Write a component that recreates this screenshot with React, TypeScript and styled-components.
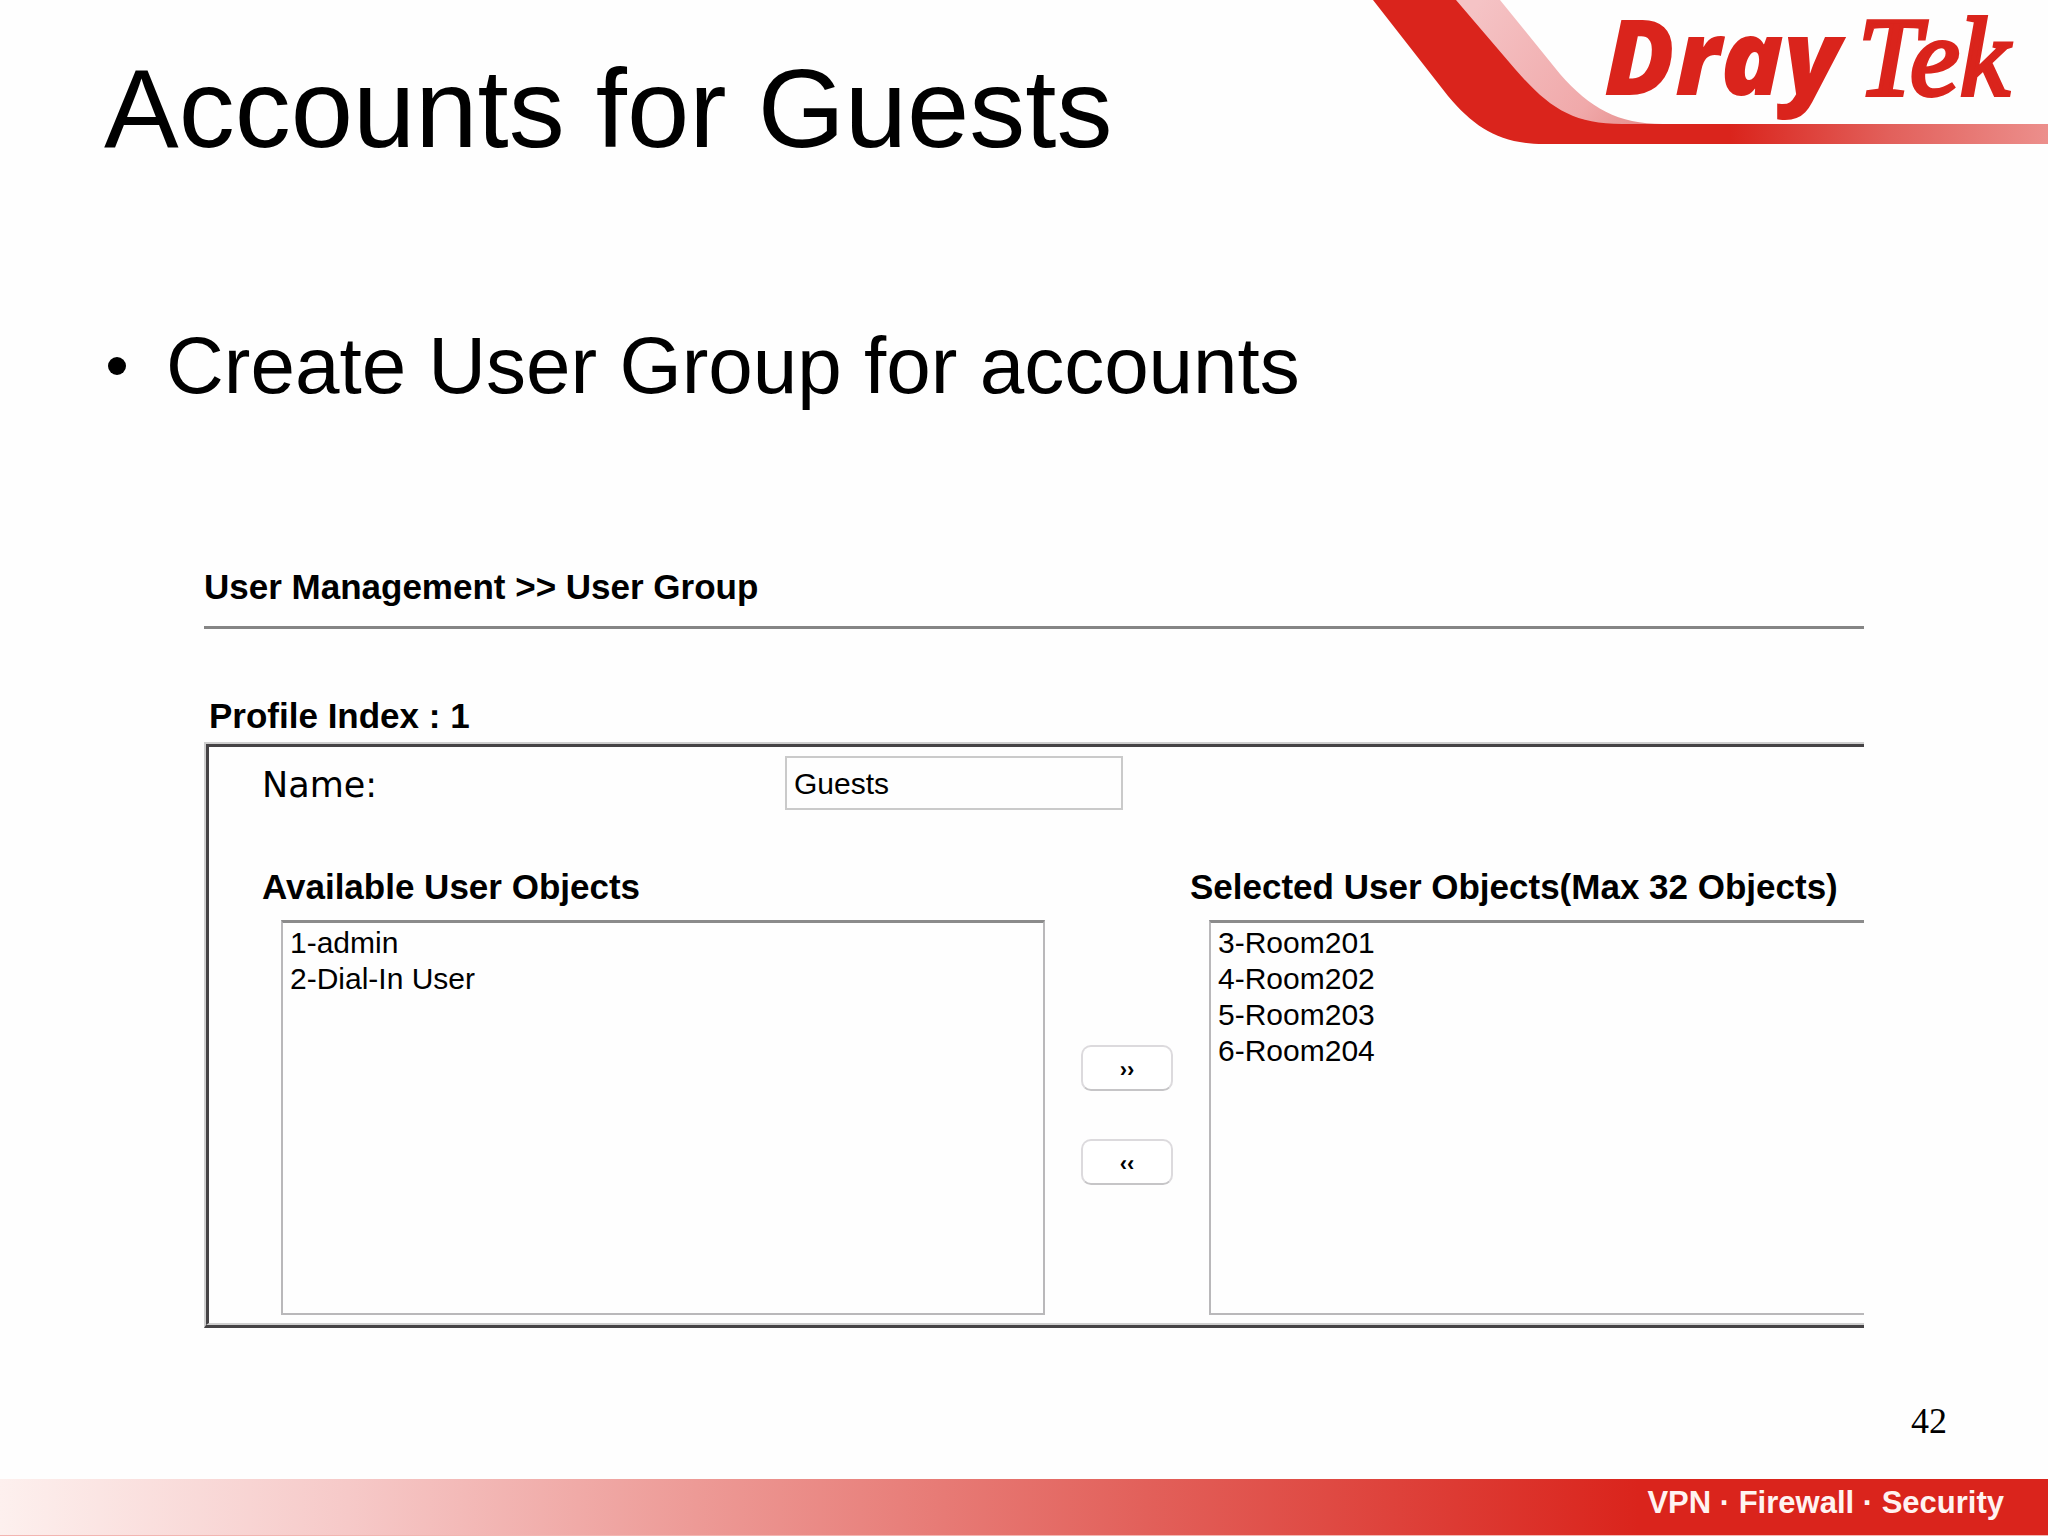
import React from "react";
import styled, { createGlobalStyle } from "styled-components";

const sans = `"Liberation Sans", Arial, Helvetica, sans-serif`;
const serif = `"Liberation Serif", "Times New Roman", serif`;
const red = "#da241c";

const GlobalStyle = createGlobalStyle`
  *, *::before, *::after { box-sizing: border-box; }
  body { margin: 0; background: #fefefe; color: #000; font-family: ${sans}; }
`;

const Slide = styled.main`
  display: flex;
  flex-direction: column;
  min-height: 100vh;
  overflow: hidden;
`;

const Header = styled.header`
  display: flex;
  justify-content: space-between;
  align-items: flex-start;
  padding-left: 104px;
`;

const Title = styled.h1`
  margin: 0;
  padding-top: 45px;
  font-size: 112px;
  line-height: 128px;
  font-weight: 400;
  white-space: nowrap;
`;

const Brand = styled.svg`
  flex: none;
  width: 688px;
  height: 160px;
  overflow: visible;
`;

const Points = styled.ul`
  margin: 147px 0 0;
  padding: 0 0 0 108px;
  list-style: none;
  font-size: 80px;
  line-height: 92px;
`;

const Point = styled.li`
  display: flex;
  align-items: center;
  gap: 40px;

  &::before {
    content: "";
    width: 18px;
    height: 18px;
    border-radius: 50%;
    background: #000;
  }
`;

const Screen = styled.section`
  margin: 155px 184px 0 204px;
  overflow: hidden;
`;

const Heading = styled.h2`
  margin: 0;
  font-size: 35px;
  line-height: 40px;
  font-weight: 700;
  white-space: nowrap;
`;

const Breadcrumb = styled(Heading)`
  padding-bottom: 19px;
  border-bottom: 3px solid #858585;
`;

const ProfileHeading = styled(Heading)`
  padding: 67px 0 6px 5px;
`;

const Frame = styled.div`
  border: 0 solid #cfcfcf;
  border-width: 2px 0 3px 2px;
  border-bottom-color: #454345;
`;

const FrameBody = styled.form`
  padding: 9px 0 8px 53px;
  border: 0 solid #454345;
  border-width: 3px 0 2px 3px;
  border-bottom-color: #cfcfcf;
`;

const NameRow = styled.div`
  display: flex;
  align-items: flex-end;
  margin-bottom: 57px;
`;

const NameLabel = styled.label`
  width: 523px;
  font-family: "DejaVu Sans", Verdana, sans-serif;
  font-size: 35px;
  line-height: 50px;
`;

const NameInput = styled.input`
  width: 338px;
  height: 54px;
  padding: 2px 7px 0;
  border: 2px solid #cacaca;
  border-radius: 0;
  outline: 0;
  background: #fefefe;
  color: #000;
  font-family: ${sans};
  font-size: 30px;
`;

const Transfer = styled.div`
  display: flex;
`;

const ObjectColumn = styled.div`
  flex: none;
  display: flex;
  flex-direction: column;
  gap: 13px;
`;

const ObjectLabel = styled.label`
  font-size: 35px;
  line-height: 40px;
  font-weight: 700;
  white-space: nowrap;
`;

const ObjectList = styled.select`
  width: 764px;
  height: 395px;
  margin-left: 19px;
  padding: 3px 7px;
  border: 2px solid #b9b8ba;
  border-top: 3px solid #8b8b8b;
  border-radius: 0;
  outline: 0;
  background: #fefefe;
  color: #000;
  font-family: ${sans};
  font-size: 30px;
`;

const ObjectOption = styled.option`
  min-height: 36px;
  padding: 0;
`;

const MoveButtons = styled.div`
  flex: none;
  display: flex;
  flex-direction: column;
  gap: 48px;
  padding: 178px 17px 0 36px;
`;

const MoveButton = styled.button`
  width: 92px;
  height: 46px;
  padding: 4px 0 0;
  border: 2px solid #dcdadd;
  border-bottom-color: #c6c5c7;
  border-radius: 10px;
  background: #fff;
  color: #000;
  font-family: ${sans};
  font-size: 22px;
  font-weight: 700;
`;

const Footer = styled.footer`
  margin-top: auto;
`;

const PageNumber = styled.p`
  margin: 0;
  padding: 0 101px 38px 0;
  font-family: ${serif};
  font-size: 36px;
  line-height: 40px;
  text-align: right;
`;

const Strip = styled.div`
  height: 57px;
  padding: 6px 44px 0 0;
  border-bottom: 1px solid #f3b5b1;
  background: linear-gradient(90deg, #fdf0ee 0%, #f6c9c8 17%, #ed9a96 34%, #e2605a 56%, ${red} 80%);
  color: #fff3f1;
  font-size: 31px;
  line-height: 36px;
  font-weight: 700;
  text-align: right;
`;

type ObjectsProps = { id: string; label: string; items: string[] };

function UserObjects({ id, label, items }: ObjectsProps) {
  return (
    <ObjectColumn>
      <ObjectLabel htmlFor={id}>{label}</ObjectLabel>
      <ObjectList id={id} multiple>
        {items.map((item) => (
          <ObjectOption key={item}>{item}</ObjectOption>
        ))}
      </ObjectList>
    </ObjectColumn>
  );
}

function DrayTekBrand() {
  return (
    <Brand viewBox="0 0 688 160" role="img" aria-label="DrayTek">
      <defs>
        <linearGradient id="band" gradientUnits="userSpaceOnUse" x1="370" y1="0" x2="688" y2="0">
          <stop offset="0" stopColor={red} />
          <stop offset="0.5" stopColor="#e2605b" />
          <stop offset="1" stopColor="#ec8f8c" />
        </linearGradient>
        <linearGradient id="fold" gradientUnits="userSpaceOnUse" x1="120" y1="0" x2="290" y2="124">
          <stop offset="0" stopColor="#f5c3c5" />
          <stop offset="0.7" stopColor="#f0a9aa" />
          <stop offset="1" stopColor="#e58d8b" />
        </linearGradient>
      </defs>
      <path d="M94 0H140L200 74C230 108 258 124 303 124V126H262C212 126 188 111 158 78Z" fill="url(#fold)" />
      <path
        d="M13 0H96L155 69C188 107 212 124 262 124H688V144H184C140 144 115 128 88 96Z"
        fill="url(#band)"
      />
      <g fill={red}>
        <text x="244" y="95" fontFamily="Open Sans, sans-serif" fontSize="104" fontWeight="800" fontStyle="italic">
          Dray
        </text>
        <text
          x="498"
          y="95"
          fontFamily="Liberation Serif, serif"
          fontSize="112"
          fontStyle="italic"
          stroke={red}
          strokeWidth="4"
        >
          Tek
        </text>
      </g>
    </Brand>
  );
}

export default function App() {
  return (
    <>
      <GlobalStyle />
      <Slide>
        <Header>
          <Title>Accounts for Guests</Title>
          <DrayTekBrand />
        </Header>
        <Points>
          <Point>Create User Group for accounts</Point>
        </Points>
        <Screen>
          <Breadcrumb>User Management &gt;&gt; User Group</Breadcrumb>
          <ProfileHeading as="h3">Profile Index : 1</ProfileHeading>
          <Frame>
            <FrameBody>
              <NameRow>
                <NameLabel htmlFor="group-name">Name:</NameLabel>
                <NameInput id="group-name" type="text" defaultValue="Guests" />
              </NameRow>
              <Transfer>
                <UserObjects
                  id="available"
                  label="Available User Objects"
                  items={["1-admin", "2-Dial-In User"]}
                />
                <MoveButtons>
                  <MoveButton type="button">››</MoveButton>
                  <MoveButton type="button">‹‹</MoveButton>
                </MoveButtons>
                <UserObjects
                  id="selected"
                  label="Selected User Objects(Max 32 Objects)"
                  items={["3-Room201", "4-Room202", "5-Room203", "6-Room204"]}
                />
              </Transfer>
            </FrameBody>
          </Frame>
        </Screen>
        <Footer>
          <PageNumber>42</PageNumber>
          <Strip>VPN · Firewall · Security</Strip>
        </Footer>
      </Slide>
    </>
  );
}
